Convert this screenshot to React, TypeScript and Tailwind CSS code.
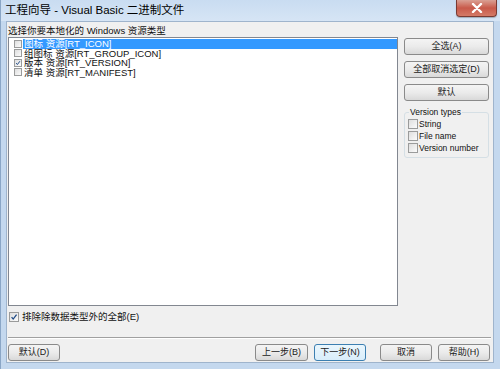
import type { ReactNode } from "react";

const FONT = "font-['Liberation_Sans','Noto_Sans_CJK_SC',sans-serif]";

function Check({ checked = false, size = "w-[9px] h-[9px]" }: { checked?: boolean; size?: string }) {
  return (
    <div
      className={`${size} relative shrink-0 border border-[#9a9b9b] bg-gradient-to-br from-[#dedede] to-[#fbfbfb]`}
    >
      {checked && (
        <svg viewBox="0 0 10 10" className="absolute inset-0 w-full h-full">
          <path d="M2 5.2 L4 7.6 L8.2 2" fill="none" stroke="#1f4a86" strokeWidth="1.6" />
        </svg>
      )}
    </div>
  );
}

function Btn({ children, w, focus = false, className = "" }: { children: ReactNode; w: string; focus?: boolean; className?: string }) {
  return (
    <div
      className={`${w} h-[17px] shrink-0 flex items-center justify-center rounded-[3px] border text-[9px] text-[#1a1a1a] ${
        focus
          ? "border-[#3c7fb1] bg-gradient-to-b from-[#eaf6fd] to-[#d9eefb]"
          : "border-[#8a8a8a] bg-gradient-to-b from-[#f4f4f4] via-[#ebebeb] to-[#d9d9d9]"
      } ${className}`}
    >
      {children}
    </div>
  );
}

const items = [
  { label: "图标 资源[RT_ICON]", checked: false, sel: true },
  { label: "组图标 资源[RT_GROUP_ICON]", checked: false, sel: false },
  { label: "版本 资源[RT_VERSION]", checked: true, sel: false },
  { label: "清单 资源[RT_MANIFEST]", checked: false, sel: false },
];

export default function App() {
  return (
    <div className={`w-[500px] h-[369px] flex flex-col bg-[#c4d8ee] border-l border-[#8aa6c6] ${FONT}`}>
      {/* title bar */}
      <div className="h-[21px] shrink-0 flex items-start bg-gradient-to-b from-[#c9dcf1] to-[#d6e5f5]">
        <div className="pl-[4px] pt-[2px] text-[11.5px] leading-[16px] text-black">工程向导 - Visual Basic 二进制文件</div>
        <div className="grow" />
        <div className="mr-[3px] w-[41px] h-[17px] flex items-center justify-center rounded-b-[4px] border border-t-0 border-[#7a3a32] bg-gradient-to-b from-[#d9a094] via-[#c8594a] to-[#d47a67] shadow-[0_1px_1px_rgba(0,0,0,0.25)]">
          <svg viewBox="0 0 12 10" className="w-[12px] h-[10px]">
            <path d="M2 1 L10 9 M10 1 L2 9" stroke="#ffffff" strokeWidth="2.4" strokeLinecap="round" />
          </svg>
        </div>
      </div>

      {/* frame + client */}
      <div className="flex-1 flex pl-[5px] pr-[6px] pb-[6px]">
        <div className="flex-1 flex flex-col border border-[#9fb4cc] bg-[#f0f0f0] pl-[1px] pr-[2px] pt-[3px]">
          <div className="h-[12px] text-[9.5px] leading-[12px] text-[#111]">选择你要本地化的 Windows 资源类型</div>

          <div className="h-[269px] flex">
            {/* list box */}
            <div className="w-[390px] h-full border border-[#828790] bg-white pt-[1px]">
              {items.map((it) => (
                <div key={it.label} className="h-[9.5px] flex items-center">
                  <div className="w-[14px] flex justify-end pr-[1px]">
                    <Check checked={it.checked} size="w-[8px] h-[8px]" />
                  </div>
                  <div
                    className={`flex-1 h-full pl-[1px] text-[9.5px] leading-[9.5px] ${
                      it.sel ? "bg-[#3399ff] text-white" : "text-[#111]"
                    }`}
                  >
                    {it.label}
                  </div>
                </div>
              ))}
            </div>

            {/* right column */}
            <div className="ml-[6px] w-[85px] flex flex-col pt-[1px]">
              <Btn w="w-[85px]">全选(A)</Btn>
              <Btn w="w-[85px]" className="mt-[6px]">全部取消选定(D)</Btn>
              <Btn w="w-[85px]" className="mt-[6px]">默认</Btn>
              <div className="relative mt-[11px] h-[46px] border border-[#d5dfe5] rounded-[3px] pt-[6px] pl-[3px] flex flex-col gap-[2px]">
                <div className="absolute -top-[6px] left-[4px] px-[1px] bg-[#f0f0f0] text-[8.5px] leading-[10px] text-[#111]">Version types</div>
                {["String", "File name", "Version number"].map((t) => (
                  <div key={t} className="h-[10px] flex items-center gap-[1px]">
                    <Check size="w-[10px] h-[10px]" />
                    <span className="text-[8.5px] leading-[10px] text-[#111]">{t}</span>
                  </div>
                ))}
              </div>
            </div>
          </div>

          <div className="mt-[5px] h-[11px] flex items-center gap-[3px] pl-[1px]">
            <Check checked size="w-[10px] h-[10px]" />
            <span className="text-[9.5px] leading-[11px] text-[#111]">排除除数据类型外的全部(E)</span>
          </div>

          <div className="mt-[15px] h-[2px] border-t border-[#a0a0a0] border-b border-b-white" />

          <div className="mt-[5px] flex items-center">
            <Btn w="w-[52px]">默认(D)</Btn>
            <div className="grow" />
            <Btn w="w-[53px]">上一步(B)</Btn>
            <Btn w="w-[52px]" focus className="ml-[6px]">下一步(N)</Btn>
            <Btn w="w-[52px]" className="ml-[14px]">取消</Btn>
            <Btn w="w-[52px]" className="ml-[6px] mr-[1px]">帮助(H)</Btn>
          </div>
        </div>
      </div>
    </div>
  );
}
